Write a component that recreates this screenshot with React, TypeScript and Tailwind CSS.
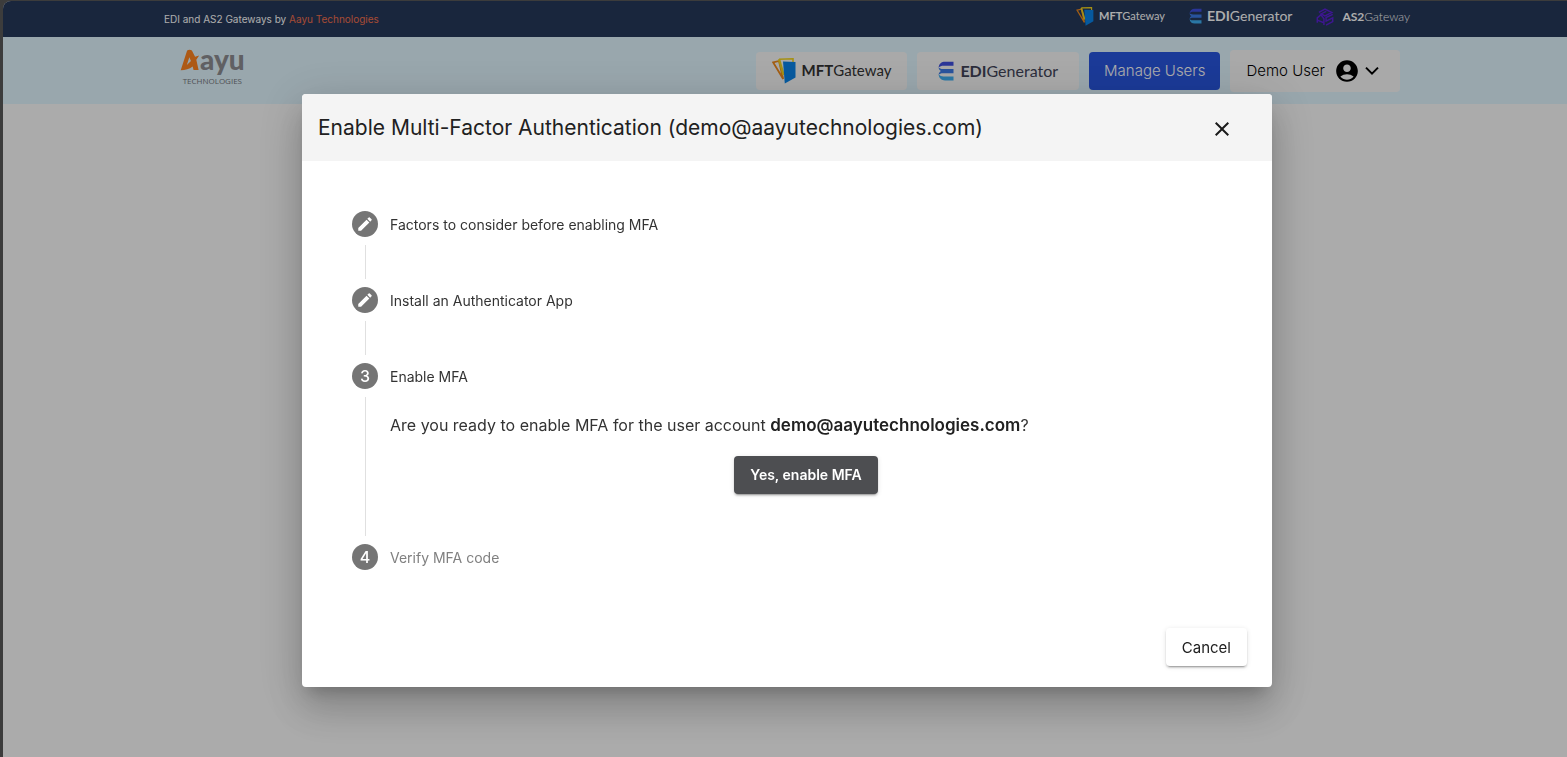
import React from 'react';
import { MdAccountCircle, MdClose, MdCreate } from 'react-icons/md';

function MftIcon({ className }: { className?: string }) {
  return (
    <svg viewBox="0 0 24 26" className={className} aria-hidden="true">
      <path d="M1.2 4.4L7 3L11.2 21Z" fill="none" stroke="#f08a1d" strokeWidth="1.8" />
      <path d="M7 1.2L21 .8V4" fill="none" stroke="#f4d51f" strokeWidth="1.6" />
      <path d="M7 1.2L11.6 17" fill="none" stroke="#f4d51f" strokeWidth="2.4" />
      <path d="M11 3.6L23.5 4V19.6L12.8 25.6Z" fill="#0a84ea" />
    </svg>
  );
}

function EdiIcon({ className }: { className?: string }) {
  return (
    <svg viewBox="0 0 16 20" className={className} aria-hidden="true">
      <path d="M15.5 .8H7C3.5 .8 1 2.8 .6 6.6C2 5.2 3.6 4.8 5.4 4.8H15.5Z" fill="#3f4fe0" />
      <path d="M15.5 8H5C3 8 1.4 7.4 .6 6.2C.8 8.4 1.8 9.6 3 10C1.8 10.6 .8 11.8 .6 14C1.4 12.8 3 12.2 5 12.2H15.5Z" fill="#3c7be8" />
      <path d="M15.5 19.4H7C3.5 19.4 1 17.4 .6 13.6C2 15 3.6 15.4 5.4 15.4H15.5Z" fill="#3fb0f3" />
    </svg>
  );
}

function As2Icon({ className }: { className?: string }) {
  return (
    <svg viewBox="0 0 20 20" className={className} fill="none" stroke="#5b21d6" strokeWidth="1.6" aria-hidden="true">
      <path d="M3.2 4.8L10 1.2L17.6 5L10 8.8L5.6 6.6L11.4 3.8" />
      <path d="M1.4 16.4V11L5.4 7.6L8.8 12V19M1.4 13.4L8.8 16.4" />
      <path d="M18.6 7L11.2 10.6V14.6L18.6 11V15.2L11.2 19" />
    </svg>
  );
}

function AayuLogo() {
  return (
    <a href="#" className="flex flex-col items-center">
      <span className="flex items-end">
        <svg viewBox="0 0 20 23" className="h-[22px] w-5" aria-hidden="true">
          <path
            d="M7 1.5Q9.5 0 12 1.5L15.3 8.2L19.6 6.8L16.6 11.2L19 22H13.7L12.8 18.2Q7.5 22.2.3 22.2ZM9.3 8.5L6.7 16.8L11 12.6Z"
            fill="#ff8420"
            fillRule="evenodd"
          />
        </svg>
        <span className="font-[Lato] text-[28px] leading-6 font-black text-[#8e8e93]">ayu</span>
      </span>
      <span className="mt-1 font-['Open_Sans'] text-[8px] leading-3 text-[#75787e]">TECHNOLOGIES</span>
    </a>
  );
}

function StepBadge({ children }: { children: React.ReactNode }) {
  return (
    <span className="flex size-[26px] shrink-0 items-center justify-center rounded-full bg-[#757575] text-base font-medium text-white">
      {children}
    </span>
  );
}

interface StepProps {
  badge: React.ReactNode;
  label: string;
  muted?: boolean;
  last?: boolean;
  children?: React.ReactNode;
}

function Step({ badge, label, muted, last, children }: StepProps) {
  return (
    <li className={last ? 'flex gap-3' : 'flex min-h-[76px] gap-3'}>
      <div className="flex flex-col items-center">
        <StepBadge>{badge}</StepBadge>
        {!last && <span className="my-2 w-px flex-1 bg-[#e0e0e0]" />}
      </div>
      <div className="flex-1">
        <h3 className={muted ? 'text-sm leading-7 text-[#808080]' : 'text-sm leading-7 text-[#333333]'}>
          {label}
        </h3>
        {children}
      </div>
    </li>
  );
}

export default function App() {
  return (
    <div className="min-h-screen bg-[#595959] pt-px pl-[3px] font-[Inter,sans-serif]">
      <div className="relative min-h-[calc(100vh-1px)] overflow-hidden rounded-tl-lg bg-[#fdfdfd]">
        <div className="bg-[#26385a] pl-1">
          <div className="mx-auto flex h-9 max-w-[1246px] items-center justify-between">
            <p className="text-[10px] leading-4 text-white">
              EDI and AS2 Gateways by <a href="#" className="text-[#f2704e]">Aayu Technologies</a>
            </p>
            <nav className="flex items-center gap-6 pb-[6px] font-[Lato] text-white">
              <a href="#" className="flex items-center gap-[5px] text-[11px]">
                <MftIcon className="h-[19px] w-[18px]" />
                <span><b>MFT</b>Gateway</span>
              </a>
              <a href="#" className="flex items-center gap-[5px] text-sm">
                <EdiIcon className="h-4 w-[13px]" />
                <span><b>EDI</b>Generator</span>
              </a>
              <a href="#" className="flex items-center gap-2 pt-[2px] text-xs">
                <As2Icon className="size-[18px]" />
                <span className="font-light"><b className="font-bold">AS2</b>Gateway</span>
              </a>
            </nav>
          </div>
        </div>

        <header className="bg-[#e2f6ff] pl-1">
          <div className="mx-auto flex h-[67px] max-w-[1246px] items-center justify-between pr-[10px] pl-4">
            <div className="pb-2">
              <AayuLogo />
            </div>
            <div className="flex items-center gap-[10px]">
              <a href="#" className="flex h-[38px] items-center gap-[6px] rounded bg-[#fafafa] px-4 font-[Lato] text-[15px] text-[#333333]">
                <MftIcon className="h-[26px] w-6" />
                <span><b>MFT</b>Gateway</span>
              </a>
              <a href="#" className="flex h-[38px] items-center gap-[6px] rounded bg-[#fafafa] px-[21px] font-[Lato] text-base text-[#414458]">
                <EdiIcon className="h-5 w-4" />
                <span><b>EDI</b>Generator</span>
              </a>
              <button className="h-[38px] rounded bg-[#2856e0] px-[15px] pt-[2px] text-[15px] font-light text-white">Manage Users</button>
              <button className="flex h-[42px] items-center rounded bg-[#fafafa] px-4 text-[15px] font-light text-black">
                <span className="pt-[2px]">Demo User</span>
                <MdAccountCircle className="ml-[9px] size-[26px] text-black" />
                <svg viewBox="0 0 24 24" className="mx-1 size-4" fill="none" stroke="#000" strokeWidth="3" aria-hidden="true">
                  <path d="M3 7L12 16L21 7" />
                </svg>
              </button>
            </div>
          </div>
        </header>
      </div>

      <div className="fixed inset-0 flex items-start justify-center bg-black/32 pt-[94px] pl-[7px]">
        <section
          role="dialog"
          aria-labelledby="mfa-title"
          className="w-full max-w-[970px] overflow-hidden rounded bg-white shadow-[0_11px_15px_-7px_rgba(0,0,0,0.2),0_24px_38px_3px_rgba(0,0,0,0.14),0_9px_46px_8px_rgba(0,0,0,0.12)]"
        >
          <div className="flex h-[67px] items-center justify-between bg-[#f4f4f4] pr-[38px] pl-4">
            <h2 id="mfa-title" className="text-[21px] leading-8 text-[#212121]">
              Enable Multi-Factor Authentication (demo@aayutechnologies.com)
            </h2>
            <button aria-label="Close" className="pt-[2px] text-[#1a1a1a]">
              <MdClose className="size-6" />
            </button>
          </div>

          <ol className="px-[50px] pt-[50px]">
            <Step badge={<MdCreate className="size-[18px]" />} label="Factors to consider before enabling MFA" />
            <Step badge={<MdCreate className="size-[18px]" />} label="Install an Authenticator App" />
            <Step badge="3" label="Enable MFA">
              <p className="mt-5 text-base leading-7 text-[#333333]">
                Are you ready to enable MFA for the user account{' '}
                <b className="text-[17px] font-semibold text-[#212121]">demo@aayutechnologies.com</b>?
              </p>
              <div className="mt-[17px] pb-[50px] text-center">
                <button className="h-[38px] rounded bg-[#4d4e51] px-4 align-top text-sm font-semibold text-white shadow-[0_3px_1px_-2px_rgba(0,0,0,0.2),0_2px_2px_0_rgba(0,0,0,0.14),0_1px_5px_0_rgba(0,0,0,0.12)]">
                  Yes, enable MFA
                </button>
              </div>
            </Step>
            <Step badge="4" label="Verify MFA code" muted last />
          </ol>

          <div className="flex justify-end px-[25px] pt-14 pb-[21px]">
            <button className="h-[38px] rounded bg-white px-4 pt-[2px] text-[15px] text-[#212121] shadow-[0_3px_1px_-2px_rgba(0,0,0,0.2),0_2px_2px_0_rgba(0,0,0,0.14),0_1px_5px_0_rgba(0,0,0,0.12)]">
              Cancel
            </button>
          </div>
        </section>
      </div>
    </div>
  );
}
